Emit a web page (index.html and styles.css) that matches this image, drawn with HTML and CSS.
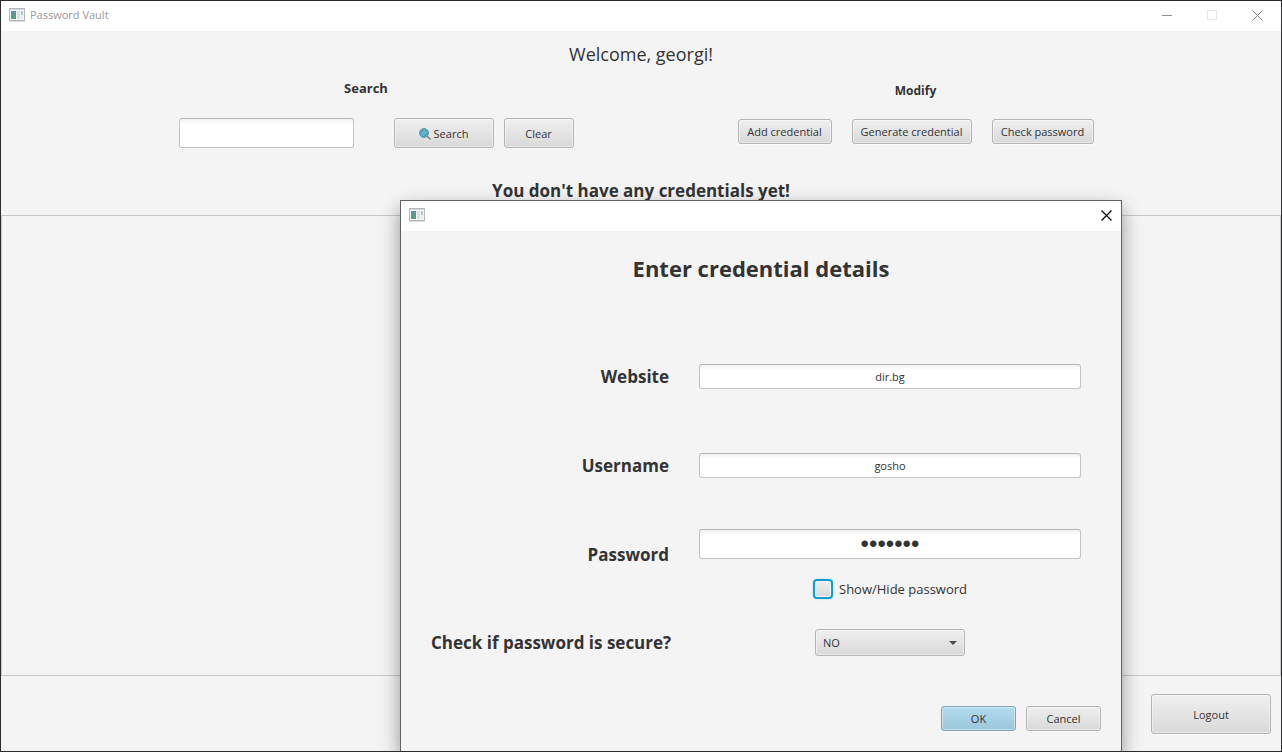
FILE: index.html
```html
<!DOCTYPE html>
<html lang="en">
<head>
<meta charset="utf-8">
<title>Password Vault</title>
<link rel="stylesheet" href="styles.css">
</head>
<body>
<svg class="defs" width="0" height="0" aria-hidden="true">
  <defs>
    <linearGradient id="pane" x1="0" y1="0" x2="0.4" y2="1"><stop offset="0" stop-color="#5f8fb5"/><stop offset="1" stop-color="#4fa878"/></linearGradient>
    <symbol id="app-icon" viewBox="0 0 16 14">
      <rect x="0.5" y="0.5" width="15" height="12" fill="#f6f6f6" stroke="#b4b8bc"/>
      <path d="M1 1.5h14" stroke="#d3d8e0"/>
      <rect x="2" y="3" width="5" height="8" fill="url(#pane)"/>
      <rect x="8" y="3" width="3" height="8" fill="#dedede"/>
      <rect x="12" y="3" width="2" height="4" fill="#a8d0c4"/>
      <rect x="12" y="7" width="2" height="4" fill="#ececec"/>
      <path d="M0 13.5h16" stroke="#dcdcdc"/>
    </symbol>
  </defs>
</svg>
<div class="window">
  <header class="titlebar">
    <svg class="app-icon"><use href="#app-icon"/></svg>
    <span class="titlebar-text">Password Vault</span>
    <div class="window-controls">
      <button class="control" type="button" aria-label="Minimize"><svg width="11" height="11" viewBox="0 0 11 11"><path d="M0 5.5h10" stroke="#8f8f8f"/></svg></button>
      <button class="control" type="button" aria-label="Maximize" disabled><svg width="11" height="11" viewBox="0 0 11 11"><rect x="0.5" y="0.5" width="9" height="9" fill="none" stroke="#e6e6e6"/></svg></button>
      <button class="control" type="button" aria-label="Close"><svg width="11" height="11" viewBox="0 0 11 11"><path d="M0.5 0.5l10 10M10.5 0.5l-10 10" stroke="#858585"/></svg></button>
    </div>
  </header>

  <section class="top">
    <h1 class="welcome">Welcome, georgi!</h1>
    <div class="tools">
      <form class="search">
        <label class="search-label" for="query">Search</label>
        <div class="search-row">
          <input class="field search-field" id="query" type="text">
          <div class="search-buttons">
            <button class="button search-button" type="button">
              <svg width="12" height="12" viewBox="0 0 12 12" aria-hidden="true"><path d="M8 8l3.5 3.5" stroke="#6d7480" stroke-width="1.2"/><circle cx="5" cy="5" r="4.5" fill="#4ba5c3" stroke="#6f93a5"/><path d="M2.3 6.3l4-4M3.6 7.6l4-4" stroke="#86cbe0"/></svg>
              Search
            </button>
            <button class="button clear-button" type="button">Clear</button>
          </div>
        </div>
      </form>
      <div class="modify">
        <h2 class="modify-label">Modify</h2>
        <div class="modify-row">
          <button class="button add-button" type="button">Add credential</button>
          <button class="button generate-button" type="button">Generate credential</button>
          <button class="button check-button" type="button">Check password</button>
        </div>
      </div>
    </div>
    <p class="status">You don't have any credentials yet!</p>
  </section>

  <main class="list"></main>

  <footer class="bottom">
    <button class="button logout" type="button">Logout</button>
  </footer>
</div>

<section class="dialog" role="dialog" aria-labelledby="dialog-title">
  <header class="titlebar">
    <svg class="app-icon"><use href="#app-icon"/></svg>
    <button class="control dialog-close" type="button" aria-label="Close"><svg width="11" height="11" viewBox="0 0 11 11"><path d="M0.5 0.5l10 10M10.5 0.5l-10 10" stroke="#000" stroke-width="1.2"/></svg></button>
  </header>
  <form class="dialog-body">
    <h2 class="dialog-title" id="dialog-title">Enter credential details</h2>
    <div class="form-grid">
      <label class="form-label" for="website">Website</label>
      <input class="field form-field" id="website" type="text" value="dir.bg">
      <label class="form-label" for="username">Username</label>
      <input class="field form-field" id="username" type="text" value="gosho">
      <label class="form-label" for="password">Password</label>
      <div class="password-group">
        <input class="field form-field password-field" id="password" type="password" value="1234567">
        <label class="show-label"><input class="checkbox" type="checkbox">Show/Hide password</label>
      </div>
      <label class="form-label" for="secure">Check if password is secure?</label>
      <div class="select-wrap">
        <select class="select" id="secure"><option>NO</option><option>YES</option></select>
        <svg class="select-arrow" width="8" height="4" viewBox="0 0 8 4" aria-hidden="true"><path d="M0 0h8l-4 4z" fill="#4d4d4d"/></svg>
      </div>
    </div>
    <div class="dialog-actions">
      <button class="button action primary" type="button">OK</button>
      <button class="button action" type="button">Cancel</button>
    </div>
  </form>
</section>
</body>
</html>
```
FILE: styles.css
```css
* { box-sizing: border-box; }

body {
  margin: 0;
  position: relative;
  min-height: 100vh;
  overflow: hidden;
  background: #f4f4f4;
  color: #333;
  font: 11px/16px "Open Sans", "Noto Sans", sans-serif;
}

.defs { position: absolute; }

.window {
  display: flex;
  flex-direction: column;
  min-height: 100vh;
  border: 1px solid #2b2b30;
}

.titlebar {
  display: flex;
  align-items: center;
  height: 30px;
  padding: 0 1px 2px 8px;
  background: #fff;
}

.app-icon { width: 16px; height: 14px; }

.titlebar-text {
  margin-left: 5px;
  color: #999;
}

.window-controls {
  display: flex;
  height: 100%;
  margin-left: auto;
}

.control {
  display: grid;
  place-items: center;
  width: 45px;
  height: 100%;
  padding: 0;
  border: 0;
  background: none;
}

.top { text-align: center; }

.welcome {
  margin: 11px 0 0;
  font-size: 18px;
  font-weight: 400;
  line-height: 24px;
}

.tools {
  display: flex;
  justify-content: center;
  gap: 164px;
  padding-right: 10px;
  margin-top: 13px;
}

.search-label {
  display: block;
  padding-right: 20px;
  font-size: 13px;
  font-weight: 700;
  line-height: 18px;
}

.search-row {
  display: flex;
  gap: 40px;
  margin-top: 21px;
}

.search-buttons { display: flex; gap: 10px; }

.field {
  border: 1px solid #c3c3c3;
  border-top-color: #b5b5b5;
  border-radius: 3px;
  background: linear-gradient(#f0f0f0, #fff 5px);
  color: #333;
  font: inherit;
  outline: 0;
}

.search-field { width: 175px; height: 30px; }

.button {
  display: inline-flex;
  align-items: center;
  justify-content: center;
  gap: 3px;
  padding: 1px 0 0;
  border: 1px solid #b4b4b4;
  border-radius: 3px;
  background: linear-gradient(#efefef, #d9d9d9);
  box-shadow: inset 0 0 0 1px rgba(255, 255, 255, 0.45), 0 1px 0 #fafafa;
  color: #333;
  font: inherit;
  white-space: nowrap;
}

.search-button { width: 100px; height: 30px; }
.clear-button { width: 70px; height: 30px; }

.modify-label {
  margin: 4px 0 0;
  font-size: 12px;
  line-height: 16px;
}

.modify-row {
  display: flex;
  gap: 20px;
  margin-top: 20px;
}

.modify-row .button { height: 25px; }
.add-button { width: 94px; }
.generate-button { width: 120px; }
.check-button { width: 102px; }

.status {
  margin: 31px 0 0;
  font-size: 17px;
  font-weight: 700;
  line-height: 24px;
}

.list {
  flex: 1;
  margin-top: 12px;
  border: 1px solid #c8c8c8;
}

.bottom {
  display: flex;
  justify-content: flex-end;
  padding: 18px 10px 17px;
}

.logout { width: 120px; height: 40px; }

.dialog {
  position: absolute;
  top: 200px;
  bottom: 1px;
  left: 400px;
  width: 722px;
  border: 1px solid #626262;
  border-bottom: 0;
  background: #f4f4f4;
  box-shadow: 0 8px 18px rgba(0, 0, 0, 0.4);
  clip-path: inset(-30px -30px 0 -30px);
}

.dialog-close {
  width: 27px;
  margin-left: auto;
}

.dialog-title {
  margin: 20px 0 0;
  font-size: 22px;
  line-height: 34px;
  text-align: center;
}

.form-grid {
  display: grid;
  grid-template-columns: 238px 1fr;
  grid-template-rows: 89px 89px 89px 87px;
  column-gap: 30px;
  align-items: center;
  margin-top: 47px;
  padding: 0 40px 0 30px;
}

.form-label {
  font-size: 17px;
  font-weight: 700;
  line-height: 24px;
  text-align: right;
  white-space: nowrap;
}

.form-field {
  width: 100%;
  height: 25px;
  text-align: center;
}

.password-group {
  display: flex;
  flex-direction: column;
  align-items: center;
  align-self: end;
  gap: 20px;
}

.password-field {
  height: 30px;
  padding: 0 2px;
  font: 24px/28px "Liberation Sans", sans-serif;
}

.show-label {
  display: flex;
  align-items: center;
  gap: 6px;
  height: 20px;
  font-size: 13px;
}

.checkbox {
  appearance: none;
  width: 20px;
  height: 20px;
  margin: 0;
  border: 2px solid #10a0d0;
  border-radius: 4px;
  background: linear-gradient(#f0f0f0, #d9d9d9);
  box-shadow: inset 0 0 0 1px #f4f4f4, 0 0 2px #8fd3ea;
}

.select-wrap {
  position: relative;
  justify-self: center;
  width: 150px;
}

.select {
  appearance: none;
  display: block;
  width: 100%;
  height: 27px;
  padding: 0 7px;
  border: 1px solid #b4b4b4;
  border-radius: 3px;
  background: linear-gradient(#efefef, #d9d9d9);
  box-shadow: inset 0 0 0 1px rgba(255, 255, 255, 0.45);
  color: #333;
  font: inherit;
}

.select-arrow {
  position: absolute;
  top: 12px;
  right: 8px;
  pointer-events: none;
}

.dialog-actions {
  display: flex;
  justify-content: flex-end;
  gap: 10px;
  margin-top: 20px;
  padding-right: 20px;
}

.action { width: 75px; height: 25px; }

.primary {
  border-color: #7aa3b7;
  background: linear-gradient(#b3dcf0, #9bc5d9);
}
```
